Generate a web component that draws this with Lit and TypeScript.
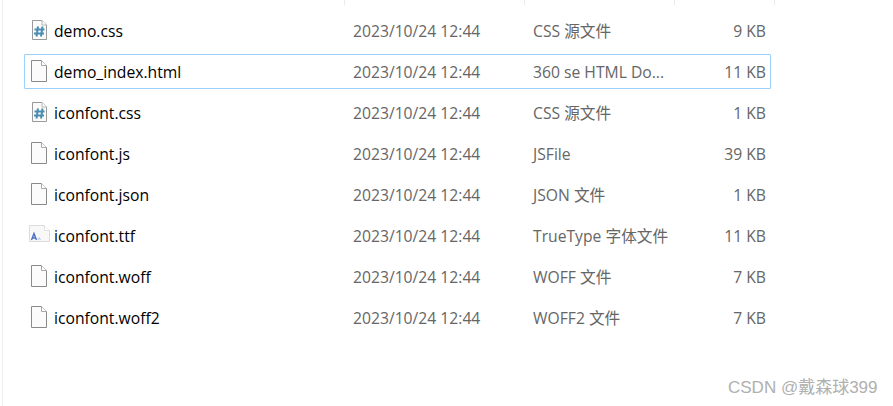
import { LitElement, html, css, svg } from "lit";
import { customElement } from "lit/decorators.js";

type Kind = "css" | "file" | "ttf";
const rows: [string, Kind, string, string, boolean?][] = [
  ["demo.css", "css", "CSS 源文件", "9 KB"],
  ["demo_index.html", "file", "360 se HTML Do...", "11 KB", true],
  ["iconfont.css", "css", "CSS 源文件", "1 KB"],
  ["iconfont.js", "file", "JSFile", "39 KB"],
  ["iconfont.json", "file", "JSON 文件", "1 KB"],
  ["iconfont.ttf", "ttf", "TrueType 字体文件", "11 KB"],
  ["iconfont.woff", "file", "WOFF 文件", "7 KB"],
  ["iconfont.woff2", "file", "WOFF2 文件", "7 KB"],
];

function icon(k: Kind) {
  if (k === "ttf") {
    return html`<svg class="ic" width="22" height="22" viewBox="0 0 22 22">
      <path d="M.5 1.5H15.5L20.5 6.5V17.5H.5Z" fill="#f8f8f8" stroke="#dcdcdc"/>
      <path d="M15.5 1.5V6.5H20.5" fill="#fff" stroke="#e2e2e2"/>
      <path d="M2.5 16L5 9.5L7.5 16M3.6 14H6.4" fill="none" stroke="#4a6fc4" stroke-width="1.4"/>
      <path d="M9 16L10.2 13.6L11.4 16" fill="none" stroke="#b4c3e6"/>
    </svg>`;
  }
  if (k === "css") {
    return html`<svg class="ic" width="22" height="22" viewBox="0 0 22 22">
      <path d="M3.5 1.5H13L17.5 6V20.5H3.5Z" fill="#fbfbfb" stroke="#9a9a9a"/>
      <path d="M13 1.5V6H17.5" fill="#fff" stroke="#b4b4b4"/>
      <path d="M9 7.5L7.5 17.5M13.5 7.5L12 17.5M5.5 10.5H15.5M5 14.5H15" fill="none" stroke="#4a8db3" stroke-width="2"/>
    </svg>`;
  }
  return html`<svg class="ic" width="22" height="22" viewBox="0 0 22 22">
    <path d="M2.5 .5H12.5L17.5 5.5V21.5H2.5Z" fill="#fbfbfb" stroke="#8a8a8a"/>
    <path d="M12.5 .5V5.5H17.5" fill="#fff" stroke="#a8a8a8"/>
  </svg>`;
}

@customElement("app-root")
export class AppRoot extends LitElement {
  static styles = css`
    :host {
      display: block;
      width: 893px;
      height: 406px;
      background: #fff;
      overflow: hidden;
      font-family: "Open Sans", "Noto Sans CJK SC", sans-serif;
      font-size: 15.7px;
    }
    .window {
      position: relative;
      height: 406px;
      margin-left: 2px;
      border-left: 1px solid #efefef;
      box-sizing: border-box;
    }
    .ticks {
      display: grid;
      grid-template-columns: 342px 180px 150px 100px;
      height: 5px;
    }
    .ticks div {
      border-right: 1px solid #eaeaea;
    }
    .list {
      display: flex;
      flex-direction: column;
      gap: 6px;
      padding: 8px 0 0 21px;
      width: 747px;
    }
    .row {
      display: grid;
      grid-template-columns: 29px 299px 180px 140px 1fr;
      height: 35px;
      box-sizing: border-box;
      align-items: center;
      border: 1px solid transparent;
      border-radius: 1px;
      white-space: nowrap;
    }
    .row.sel {
      border-color: #99d1ff;
    }
    .ic {
      display: block;
      margin-left: 4px;
      margin-top: -2px;
    }
    .name {
      color: #000;
      line-height: 20px;
    }
    .date,
    .type,
    .size {
      color: #666;
      line-height: 20px;
    }
    .size {
      text-align: right;
      padding-right: 4px;
    }
    .mark {
      position: absolute;
      left: 725px;
      top: 378px;
      font-family: "Liberation Sans", "Noto Sans CJK SC", sans-serif;
      font-size: 17px;
      line-height: 20px;
      color: #b0b0b0;
      white-space: nowrap;
    }
  `;
  render() {
    return html`<div class="window">
      <div class="ticks"><div></div><div></div><div></div><div></div></div>
      <div class="list">
        ${rows.map(
          ([n, k, t, s, sel]) => html`<div class="row ${sel ? "sel" : ""}">
            ${icon(k)}
            <span class="name">${n}</span>
            <span class="date">2023/10/24 12:44</span>
            <span class="type">${t}</span>
            <span class="size">${s}</span>
          </div>`
        )}
      </div>
      <div class="mark">CSDN @戴森球399</div>
    </div>`;
  }
}
